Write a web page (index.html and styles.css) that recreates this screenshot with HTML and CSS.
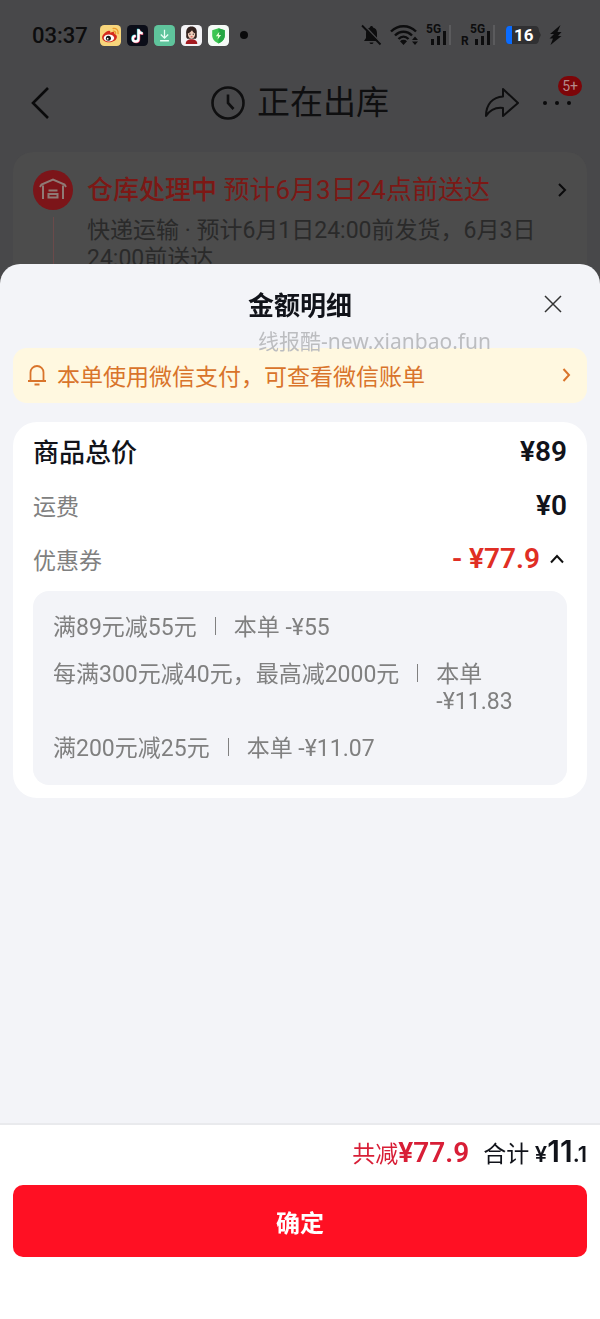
FILE: index.html
```html
<!DOCTYPE html>
<html lang="zh-CN">
  <head>
    <meta charset="UTF-8" />
    <meta name="viewport" content="width=device-width, initial-scale=1.0" />
    <title>金额明细</title>
    <link rel="stylesheet" href="styles.css">
  </head>
  <body>
    <div class="order-page">
      <div class="status-bar">
        <span class="time">03:37</span>
        <div class="app-icons">
          <svg width="21" height="21" viewBox="0 0 20 20">
            <rect width="20" height="20" rx="4" fill="#f8d67c" />
            <path d="M2 12c0-3 4-6 6.500-6.500 1.500-.2 1.500 1 1.200 1.800 2-.9 4.600-.9 4 1.200 2 .5 2.800 2 2.300 3.700-.8 2.700-4 4.300-7.500 4.300S2 14.800 2 12z" fill="#d52b1e" />
            <ellipse cx="8.500" cy="12.400" rx="5" ry="3.400" fill="#fff" />
            <circle cx="8" cy="12.600" r="2.400" fill="#181818" />
            <circle cx="7.300" cy="13" r=".8" fill="#fff" />
            <path d="M12.500 3.300c3-.5 5.300 1.800 4.700 4.800M12.700 5.800c1.400-.2 2.400.8 2.100 2.200" fill="none" stroke="#ec9b2d" stroke-width="1.300" stroke-linecap="round" />
          </svg>
          <svg width="21" height="21" viewBox="0 0 20 20">
            <rect width="20" height="20" rx="4" fill="#0b0d18" />
            <g fill="none" stroke-width="2.200">
              <path d="M10.500 3.500v9.300a2.700 2.700 0 1 1-2.700-2.700M10.500 4c.3 2 1.800 3.400 4 3.500" stroke="#35d9e0" />
              <path d="M11.500 4.500v9a2.700 2.700 0 1 1-2.700-2.700M11.500 5c.3 2 1.800 3.400 4 3.500" stroke="#e8365d" />
              <path d="M11 4v9a2.700 2.700 0 1 1-2.700-2.700M11 4.500c.3 2 1.800 3.400 4 3.500" stroke="#fff" />
            </g>
          </svg>
          <svg width="21" height="21" viewBox="0 0 20 20">
            <rect width="20" height="20" rx="4" fill="#5fc49c" />
            <path d="M10 4.500v7.500M6.500 9l3.500 3.500L13.500 9M5.800 15h8.400" fill="none" stroke="#e9fff5" stroke-width="1.200" />
          </svg>
          <svg width="21" height="21" viewBox="0 0 20 20">
            <rect width="20" height="20" rx="4" fill="#f3f2f5" />
            <path d="M5 9c-.5-5 1.500-7.500 5-7.500S15.500 4 15 8c0 2 .5 4-1 5H6c-1.500-1-1-2.500-1-4z" fill="#33221f" />
            <path d="M4.500 18c0-3 2-4.500 5.500-4.500s5.500 1.500 5.500 4.500z" fill="#a31a20" />
            <path d="M6.500 8c1.500-.5 3-1.500 4-3 .6 1.500 1.600 2.500 3 3 0 3-1.500 5-3.500 5s-3.500-2-3.500-5z" fill="#f2cdbb" />
            <circle cx="8.500" cy="8.800" r=".6" fill="#222" />
            <circle cx="11.700" cy="8.800" r=".6" fill="#222" />
            <path d="M9.200 11.200h1.800" stroke="#c33" stroke-width=".8" />
          </svg>
          <svg width="21" height="21" viewBox="0 0 20 20">
            <rect width="20" height="20" rx="4" fill="#f5faf6" />
            <path d="M10 3l6 2v5c0 3.500-2.500 6-6 7.500C6.500 16 4 13.500 4 10V5z" fill="#3cc552" />
            <path d="M10 3l6 2v5c0 3.500-2.500 6-6 7.500z" fill="#25a744" />
            <path d="M10.800 6.500L7.500 10.700h2.200l-.6 3 3.400-4.200h-2.200z" fill="#eaffd8" />
          </svg>
        </div>
        <span class="more-dot"></span>
        <div class="system-icons">
          <svg width="21" height="22" viewBox="0 0 21 22">
            <path d="M3 17l2-3V9c0-3 1.500-5 4-5.500C9 1.500 12 1.500 12 3.500c2.500.5 4 2.500 4 5.500v5l2 3zM8.500 18.500h4c-.5 2-3.500 2-4 0z" fill="#0d0d0e" />
            <path d="M3 1l18 19" stroke="#48484a" stroke-width="1.500" />
            <path d="M1 1.500l18.500 19" stroke="#0d0d0e" stroke-width="1.800" />
          </svg>
          <svg width="28" height="22" viewBox="0 0 28 22">
            <g fill="none" stroke="#0d0d0e" stroke-width="2.400">
              <path d="M1 7.500c7-7 18-7 25 0" />
              <path d="M5 11.500c5-5 12-5 17 0" />
              <path d="M8.500 15c3-3 7-3 10 0" />
            </g>
            <path d="M10 17.200c2-1.800 5-1.800 7 0L13.500 21zM22 16l3-3.500 3 3.500zM22 17.500h6L25 21z" fill="#0d0d0e" />
          </svg>
          <svg width="27" height="30" viewBox="0 0 27 30">
            <text class="net-label" x="0" y="13">5G</text>
            <path d="M5 19h3v6H5zM11 16h3v9h-3zM17 11h3v14h-3z" fill="#0d0d0e" />
            <path d="M23 5h2v20h-2z" fill="#5b5b5d" />
          </svg>
          <svg width="36" height="30" viewBox="0 0 36 30">
            <text class="net-label" x="0" y="25">R</text>
            <text class="net-label" x="9" y="13">5G</text>
            <path d="M14 19h3v6h-3zM20 16h3v9h-3zM26 11h3v14h-3z" fill="#0d0d0e" />
            <path d="M32 5h2v20h-2z" fill="#5b5b5d" />
          </svg>
          <svg width="36" height="22" viewBox="0 0 36 22">
            <path d="M4 2h26q4 0 4 5l2 4-2 4q0 5-4 5H4q-3 0-3-4V6q0-4 3-4z" fill="#303032" />
            <path d="M7 2v18H4q-3 0-3-4V6q0-4 3-4z" fill="#0a6cff" />
            <text class="battery-label" x="9" y="17">16</text>
          </svg>
          <svg width="13" height="20" viewBox="0 0 13 20">
            <path d="M11.500 0L1 9h4L.5 13.500H4L1.500 20 12.500 11H9l3.500-4H8.500z" fill="#0d0d0e" />
          </svg>
        </div>
      </div>

      <header class="order-header">
        <button type="button" class="icon-button back" aria-label="返回">
          <svg width="20" height="34" viewBox="0 0 20 34" fill="none" stroke="#0a0a0b" stroke-width="2.600">
            <path d="M19 2L4 17l15 15" />
          </svg>
        </button>
        <h1 class="order-title">
          <svg width="34" height="34" viewBox="0 0 34 34" fill="none" stroke="#0f0f10" stroke-width="2.600">
            <circle cx="17" cy="17" r="15.500" />
            <path d="M17 8.500V17l5.500 6" />
          </svg>
          正在出库
        </h1>
        <div class="header-actions">
          <button type="button" class="icon-button" aria-label="分享">
            <svg width="36" height="32" viewBox="0 0 36 32" fill="none" stroke="#0f0f10" stroke-width="2" stroke-linejoin="round">
              <path d="M19 2l15 14-15 13v-8C11 20 6 23 2 29 2 17 9 10 19 9.500z" />
            </svg>
          </button>
          <button type="button" class="icon-button more" aria-label="更多">
            <svg width="28" height="6" viewBox="0 0 28 6" fill="#0a0a0b">
              <circle cx="2" cy="3" r="2" />
              <circle cx="14" cy="3" r="2" />
              <circle cx="26" cy="3" r="2" />
            </svg>
            <span class="badge">5+</span>
          </button>
        </div>
      </header>

      <section class="delivery-card">
        <div class="timeline">
          <svg width="40" height="40" viewBox="0 0 40 40">
            <circle cx="20" cy="20" r="20" fill="#7c1519" />
            <path d="M7 17l1.500-2.500L20 9.500l11.500 5L33 17M10 15.500V29M30 15.500V29M15.500 20.500h9M15.500 24h9v3.500h-9z" fill="none" stroke="#8f7a75" stroke-width="2" />
          </svg>
          <span class="timeline-line"></span>
        </div>
        <div class="delivery-info">
          <p class="delivery-status"><strong>仓库处理中</strong> 预计6月3日24点前送达</p>
          <p class="delivery-desc">快递运输 · 预计6月1日24:00前发货，6月3日24:00前送达</p>
        </div>
        <svg class="delivery-arrow" width="10" height="14" viewBox="0 0 10 14" fill="none" stroke="#0a0a0b" stroke-width="2">
          <path d="M2 1l6 6-6 6" />
        </svg>
      </section>
    </div>

    <div class="sheet" role="dialog" aria-labelledby="sheetTitle">
      <header class="sheet-header">
        <h2 id="sheetTitle">金额明细</h2>
        <button type="button" class="icon-button close" aria-label="关闭">
          <svg width="18" height="18" viewBox="0 0 18 18" fill="none" stroke="#333" stroke-width="1.500">
            <path d="M1 1l16 16M17 1L1 17" />
          </svg>
        </button>
        <span class="watermark">线报酷-new.xianbao.fun</span>
      </header>

      <main class="sheet-body">
        <a class="notice" href="#">
          <svg width="20" height="22" viewBox="0 0 20 22" fill="none" stroke="#d9742b" stroke-width="1.800">
            <path d="M1 17h18M3.500 17V8.500a6.500 6.500 0 0 1 13 0V17M7.500 20.500h5" />
          </svg>
          <span>本单使用微信支付，可查看微信账单</span>
          <svg class="notice-arrow" width="9" height="14" viewBox="0 0 9 14" fill="none" stroke="#d9742b" stroke-width="2">
            <path d="M1.500 1L7 7l-5.500 6" />
          </svg>
        </a>

        <section class="amount-card">
          <div class="amount-row total">
            <span>商品总价</span>
            <span class="price">¥89</span>
          </div>
          <div class="amount-row">
            <span>运费</span>
            <span class="price">¥0</span>
          </div>
          <div class="amount-row">
            <span>优惠券</span>
            <button type="button" class="icon-button price discount" aria-expanded="true">
              - ¥77.9
              <svg width="16" height="10" viewBox="0 0 16 10" fill="none" stroke="#111" stroke-width="2">
                <path d="M2 8.500L8 2l6 6.500" />
              </svg>
            </button>
          </div>
          <ul class="coupons">
            <li><span class="rule">满89元减55元</span><span>本单 <span class="minus">-¥55</span></span></li>
            <li><span class="rule">每满300元减40元，最高减2000元</span><span>本单 <span class="minus">-¥11.83</span></span></li>
            <li><span class="rule">满200元减25元</span><span>本单 <span class="minus">-¥11.07</span></span></li>
          </ul>
        </section>
      </main>

      <footer class="sheet-footer">
        <div class="summary">
          <span class="saved">共减<b>¥77.9</b></span>
          <span class="payable">合计 <b>¥<span class="yuan">11</span>.1</b></span>
        </div>
        <button type="button" class="confirm">确定</button>
      </footer>
    </div>
  </body>
</html>
```
FILE: styles.css
```css
* {
  box-sizing: border-box;
}
body {
  margin: 0;
  font-family: Roboto, "Noto Sans CJK SC", sans-serif;
  font-size: 23px;
  color: #11131a;
}
h1,
h2,
p,
ul {
  margin: 0;
  padding: 0;
}
svg {
  display: block;
  flex: none;
}
.icon-button {
  display: flex;
  align-items: center;
  padding: 0;
  border: none;
  background: none;
  font-family: inherit;
  cursor: pointer;
}

/* order page under the mask */
.order-page {
  height: 100vh;
  overflow: hidden;
  background-color: #48484a;
}
.status-bar {
  display: flex;
  align-items: center;
  height: 70px;
  padding: 0 38px 0 32px;
}
.time {
  font-size: 22px;
  font-weight: 500;
  color: #0d0d0e;
}
.app-icons {
  display: flex;
  gap: 6px;
  margin-left: 12px;
}
.more-dot {
  width: 8px;
  height: 8px;
  margin-left: 11px;
  border-radius: 50%;
  background-color: #0a0a0b;
}
.system-icons {
  display: flex;
  align-items: center;
  gap: 8px;
  margin-left: auto;
}
.net-label {
  font-size: 12px;
  font-weight: 700;
  fill: #0d0d0e;
}
.battery-label {
  font-size: 17px;
  font-weight: 700;
  fill: #fff;
}
.order-header {
  display: grid;
  grid-template-columns: 1fr auto 1fr;
  align-items: center;
  height: 66px;
  padding: 0 29px;
}
.order-title {
  display: flex;
  align-items: center;
  gap: 12px;
  font-size: 33px;
  font-weight: 400;
  line-height: 40px;
  color: #0f0f10;
}
.header-actions {
  display: flex;
  justify-content: flex-end;
  gap: 23px;
}
.more {
  position: relative;
}
.badge {
  position: absolute;
  top: -11px;
  right: -11px;
  padding: 0 4px;
  border-radius: 10px;
  background-color: #7d0508;
  color: #b58a8a;
  font-size: 14px;
  line-height: 20px;
}
.delivery-card {
  display: flex;
  margin: 16px 13px 0;
  padding: 18px 20px;
  border-radius: 20px;
  background-color: #4c4c4c;
}
.timeline {
  display: flex;
  flex-direction: column;
  align-items: center;
  gap: 7px;
}
.timeline-line {
  flex: 1;
  width: 1px;
  background-color: #6a4a4a;
}
.delivery-info {
  flex: 1;
  padding: 0 20px 20px 14px;
}
.delivery-status {
  font-size: 26px;
  line-height: 40px;
  color: #7c1815;
}
.delivery-status strong {
  font-weight: 500;
}
.delivery-desc {
  margin-top: 7px;
  line-height: 28px;
  color: #2a2a2a;
}
.delivery-arrow {
  margin-top: 13px;
}

/* bottom sheet */
.sheet {
  position: fixed;
  inset: 20vh 0 0;
  display: flex;
  flex-direction: column;
  border-radius: 20px 20px 0 0;
  background-color: #f3f4f8;
  overflow: hidden;
}
.sheet-header {
  position: relative;
  display: flex;
  align-items: center;
  justify-content: center;
  height: 84px;
}
.sheet-header h2 {
  font-size: 26px;
  font-weight: 600;
  line-height: 40px;
}
.close {
  position: absolute;
  top: 31px;
  right: 38px;
}
.watermark {
  position: absolute;
  top: 64px;
  left: 43%;
  font-family: "Noto Sans", "Noto Sans CJK SC", sans-serif;
  font-size: 21px;
  line-height: 26px;
  color: #bcbdc0;
  white-space: nowrap;
  z-index: 1;
}
.sheet-body {
  flex: 1;
  padding: 0 13px;
}
.notice {
  display: flex;
  align-items: center;
  gap: 10px;
  height: 55px;
  padding: 0 16px 0 14px;
  border-radius: 14px;
  background-color: #fff8e0;
  color: #d9742b;
  text-decoration: none;
}
.notice-arrow {
  margin-left: auto;
}
.amount-card {
  margin-top: 19px;
  padding: 2px 20px 13px;
  border-radius: 24px;
  background-color: #fff;
}
.amount-row {
  display: flex;
  align-items: center;
  justify-content: space-between;
  height: 54px;
  color: #808080;
}
.total {
  font-size: 26px;
  font-weight: 500;
  color: #11131a;
}
.price {
  padding-top: 2px;
  font-size: 28px;
  font-weight: 600;
  color: #11131a;
}
.discount {
  gap: 9px;
  padding-top: 0;
  padding-right: 2px;
  color: #e02e24;
}
.coupons {
  display: flex;
  flex-direction: column;
  gap: 20px;
  margin-top: 5px;
  padding: 23px 20px;
  border-radius: 16px;
  background-color: #f3f4f8;
  color: #808080;
  line-height: 27px;
  list-style: none;
}
.coupons li {
  display: flex;
}
.rule {
  display: flex;
  flex: none;
}
.rule::after {
  content: "";
  width: 1px;
  height: 18px;
  margin: 3px 18px 0;
  background-color: #808080;
}
.minus {
  display: inline-block;
  white-space: nowrap;
}
.sheet-footer {
  padding: 8px 13px 62px;
  border-top: 2px solid #e9eaed;
  background-color: #fff;
}
.summary {
  display: flex;
  align-items: baseline;
  justify-content: flex-end;
  gap: 14px;
  height: 52px;
  line-height: 36px;
}
.saved {
  color: #d81e36;
}
.saved b {
  font-size: 28px;
  font-weight: 600;
}
.payable b {
  font-family: Inter, sans-serif;
  font-size: 22px;
  font-weight: 600;
}
.payable .yuan {
  font-size: 30px;
}
.confirm {
  display: block;
  width: 100%;
  height: 72px;
  border: none;
  border-radius: 10px;
  background-color: #ff1023;
  color: #fff;
  font-family: inherit;
  font-size: 24px;
  font-weight: 600;
  cursor: pointer;
}
```
